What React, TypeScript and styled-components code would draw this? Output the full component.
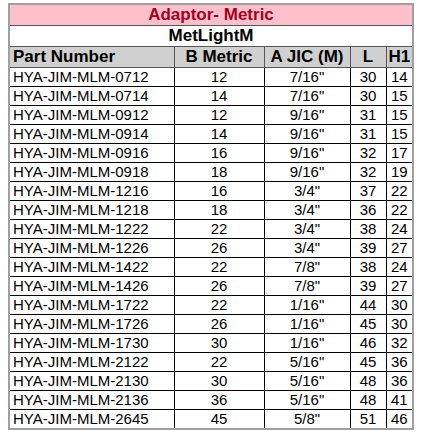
import React from 'react';
import styled, { createGlobalStyle } from 'styled-components';

const GlobalStyle = createGlobalStyle`
  html, body {
    margin: 0;
    padding: 0;
    background: #ffffff;
  }
`;

const Page = styled.div`
  padding: 3px 0 0 8px;
  font-family: 'Liberation Sans', Arial, sans-serif;
`;

const Table = styled.table`
  border-collapse: collapse;
  table-layout: fixed;
  width: 404px;
  border: 2px solid #a0a0a0;
  color: #000;
`;

const TitleCell = styled.td`
  height: 20px;
  padding: 0;
  background: #ffc0cb;
  color: #a50021;
  font-weight: bold;
  font-size: 17px;
  text-align: center;
  border-bottom: 1px solid #555;
  line-height: 20px;
`;

const SubTitleCell = styled.td`
  height: 20px;
  padding: 0;
  background: #fff;
  font-weight: bold;
  font-size: 17px;
  text-align: center;
  border-bottom: 1px solid #555;
  line-height: 20px;
`;

const HeadCell = styled.th<{ $left?: boolean }>`
  height: 20px;
  padding: 0 ${({ $left }) => ($left ? '3px' : '0')};
  background: #d0d0d0;
  font-weight: bold;
  font-size: 17px;
  text-align: ${({ $left }) => ($left ? 'left' : 'center')};
  border: 1px solid #555;
  line-height: 20px;
  white-space: nowrap;
  overflow: hidden;
`;

const Cell = styled.td<{ $left?: boolean }>`
  height: 18px;
  padding: 0 ${({ $left }) => ($left ? '3px' : '0')};
  font-size: 15px;
  text-align: ${({ $left }) => ($left ? 'left' : 'center')};
  border: 1px solid #000;
  line-height: 18px;
  white-space: nowrap;
`;

const rows: [string, number, string, number, number][] = [
  ['HYA-JIM-MLM-0712', 12, '7/16"', 30, 14],
  ['HYA-JIM-MLM-0714', 14, '7/16"', 30, 15],
  ['HYA-JIM-MLM-0912', 12, '9/16"', 31, 15],
  ['HYA-JIM-MLM-0914', 14, '9/16"', 31, 15],
  ['HYA-JIM-MLM-0916', 16, '9/16"', 32, 17],
  ['HYA-JIM-MLM-0918', 18, '9/16"', 32, 19],
  ['HYA-JIM-MLM-1216', 16, '3/4"', 37, 22],
  ['HYA-JIM-MLM-1218', 18, '3/4"', 36, 22],
  ['HYA-JIM-MLM-1222', 22, '3/4"', 38, 24],
  ['HYA-JIM-MLM-1226', 26, '3/4"', 39, 27],
  ['HYA-JIM-MLM-1422', 22, '7/8"', 38, 24],
  ['HYA-JIM-MLM-1426', 26, '7/8"', 39, 27],
  ['HYA-JIM-MLM-1722', 22, '1/16"', 44, 30],
  ['HYA-JIM-MLM-1726', 26, '1/16"', 45, 30],
  ['HYA-JIM-MLM-1730', 30, '1/16"', 46, 32],
  ['HYA-JIM-MLM-2122', 22, '5/16"', 45, 36],
  ['HYA-JIM-MLM-2130', 30, '5/16"', 48, 36],
  ['HYA-JIM-MLM-2136', 36, '5/16"', 48, 41],
  ['HYA-JIM-MLM-2645', 45, '5/8"', 51, 46],
];

export default function App() {
  return (
    <Page>
      <GlobalStyle />
      <Table>
        <colgroup>
          <col style={{ width: 165 }} />
          <col style={{ width: 90 }} />
          <col style={{ width: 86 }} />
          <col style={{ width: 36 }} />
          <col style={{ width: 27 }} />
        </colgroup>
        <thead>
          <tr>
            <TitleCell colSpan={5}>Adaptor- Metric</TitleCell>
          </tr>
          <tr>
            <SubTitleCell colSpan={5}>MetLightM</SubTitleCell>
          </tr>
          <tr>
            <HeadCell $left>Part Number</HeadCell>
            <HeadCell>B Metric</HeadCell>
            <HeadCell>A JIC (M)</HeadCell>
            <HeadCell>L</HeadCell>
            <HeadCell>H1</HeadCell>
          </tr>
        </thead>
        <tbody>
          {rows.map(([part, b, a, l, h]) => (
            <tr key={part}>
              <Cell $left>{part}</Cell>
              <Cell>{b}</Cell>
              <Cell>{a}</Cell>
              <Cell>{l}</Cell>
              <Cell>{h}</Cell>
            </tr>
          ))}
        </tbody>
      </Table>
    </Page>
  );
}
